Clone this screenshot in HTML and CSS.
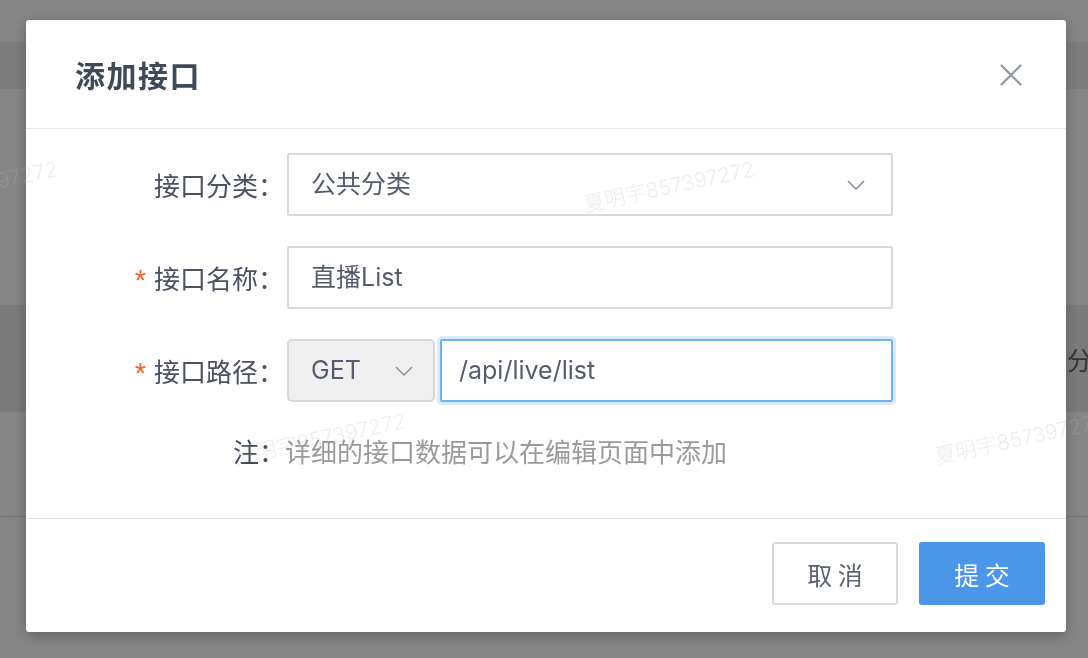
FILE: index.html
```html
<!DOCTYPE html>
<html lang="zh-CN">
<head>
<meta charset="utf-8">
<title>添加接口</title>
<link rel="stylesheet" href="styles.css">
</head>
<body>
<div class="page">
  <div class="pg-top"></div>
  <div class="pg-band"></div>
  <div class="pg-gap"></div>
  <div class="pg-band2"><span class="pg-text">分</span></div>
  <div class="pg-gap2"></div>
  <div class="pg-rest"></div>
</div>
<div class="mask"></div>
<div class="modal">
  <div class="modal-header">
    <h2 class="modal-title">添加接口</h2>
    <span class="close">
      <svg width="22" height="22" viewBox="0 0 22 22"><path d="M1.5 1.5L20.5 20.5M20.5 1.5L1.5 20.5" stroke="#8f95a6" stroke-width="2.2" stroke-linecap="round" fill="none"/></svg>
    </span>
  </div>
  <div class="modal-body">
    <div class="row">
      <label class="label">接口分类：</label>
      <div class="control select">
        <span class="value">公共分类</span>
        <svg class="chev" width="18" height="10" viewBox="0 0 18 10"><path d="M1 1L9 9L17 1" stroke="#8a90a0" stroke-width="1.6" fill="none"/></svg>
      </div>
    </div>
    <div class="row">
      <label class="label"><span class="req">*</span>接口名称：</label>
      <div class="control input"><span class="value">直播List</span></div>
    </div>
    <div class="row">
      <label class="label"><span class="req">*</span>接口路径：</label>
      <div class="control group">
        <div class="method">
          <span class="value">GET</span>
          <svg class="chev" width="18" height="10" viewBox="0 0 18 10"><path d="M1 1L9 9L17 1" stroke="#8a90a0" stroke-width="1.6" fill="none"/></svg>
        </div>
        <div class="path"><span class="value">/api/live/list</span></div>
      </div>
    </div>
    <div class="note"><span class="note-key">注：</span>详细的接口数据可以在编辑页面中添加</div>
  </div>
  <div class="modal-footer">
    <button class="btn btn-cancel">取 消</button>
    <button class="btn btn-primary">提 交</button>
  </div>
</div>
<div class="watermarks">
  <span class="wm wm0">夏明宇857397272</span>
  <span class="wm wm1">夏明宇857397272</span>
  <span class="wm wm2">夏明宇857397272</span>
  <span class="wm wm3">夏明宇857397272</span>
</div>
</body>
</html>
```

FILE: styles.css
```css
* { box-sizing: border-box; }
html, body {
  margin: 0;
  padding: 0;
  width: 1088px;
  height: 658px;
  overflow: hidden;
  background: #ffffff;
  font-family: "Inter", "Noto Sans CJK SC", sans-serif;
}
.page { width: 1088px; }
.pg-top { height: 42px; background: #ffffff; }
.pg-band { height: 47px; background: #f0f0f0; }
.pg-gap { height: 216px; background: #ffffff; }
.pg-band2 {
  height: 107px;
  background: #ebebeb;
  display: flex;
  align-items: center;
  justify-content: flex-end;
}
.pg-text {
  font-size: 25px;
  color: #666;
  margin-right: -4px;
}
.pg-gap2 { height: 105px; background: #ffffff; border-bottom: 1px solid #dddddd; }
.pg-rest { height: 141px; background: #ffffff; }

.mask {
  position: fixed;
  inset: 0;
  background: rgba(0, 0, 0, 0.48);
}

.modal {
  position: fixed;
  left: 26px;
  top: 20px;
  width: 1040px;
  height: 612px;
  background: #ffffff;
  border-radius: 3px;
  box-shadow: 0 4px 14px rgba(0, 0, 0, 0.25);
  display: flex;
  flex-direction: column;
}
.modal-header {
  height: 109px;
  border-bottom: 1px solid #e8e8e8;
  display: flex;
  align-items: center;
  justify-content: space-between;
  padding: 0 44px 0 49px;
}
.modal-title {
  margin: 0;
  font-size: 30px;
  font-weight: 700;
  color: #3f4a58;
  letter-spacing: 1.5px;
}
.close { display: flex; width: 22px; height: 22px; margin-top: 2px; }

.modal-body {
  height: 390px;
  border-bottom: 1px solid #e8e8e8;
  padding-top: 24px;
}
.row {
  display: flex;
  align-items: center;
  height: 63px;
  margin-bottom: 30px;
}
.label {
  width: 261px;
  text-align: right;
  font-size: 26px;
  color: #4a5160;
  padding-right: 3px;
  display: flex;
  align-items: center;
  justify-content: flex-end;
}
.req {
  color: #f0622d;
  margin-right: 8px;
  font-size: 29px;
  font-family: "Liberation Sans", sans-serif;
  line-height: 1;
  position: relative;
  top: 3px;
}
.control {
  width: 606px;
  height: 63px;
  font-size: 25px;
  color: #555c6d;
}
.select, .input {
  border: 2px solid #d9d9d9;
  border-radius: 2px;
  display: flex;
  align-items: center;
  justify-content: space-between;
  padding: 0 26px 0 22px;
}
.group {
  display: flex;
  gap: 5px;
}
.method {
  width: 148px;
  height: 63px;
  background: #efefef;
  border: 2px solid #d7d7d7;
  border-radius: 5px;
  display: flex;
  align-items: center;
  justify-content: space-between;
  padding: 0 20px 0 22px;
}
.path {
  flex: 1;
  height: 63px;
  border: 2px solid #6cb3f6;
  border-radius: 2px;
  box-shadow: 0 0 0 3px #dbe9fa;
  display: flex;
  align-items: center;
  padding-left: 17px;
}
.chev { display: block; }
.value { line-height: 1; }

.note {
  margin-top: 25px;
  padding-left: 207px;
  font-size: 26px;
  color: #9a9a9a;
}
.note-key { color: #3f4a58; }

.modal-footer {
  flex: 1;
  display: flex;
  justify-content: flex-end;
  align-items: flex-start;
  gap: 21px;
  padding: 23px 21px 0 0;
}
.btn {
  width: 126px;
  height: 63px;
  border-radius: 3px;
  font-family: "Noto Sans CJK SC", sans-serif;
  font-size: 25px;
  padding: 0;
}
.btn-cancel {
  background: #ffffff;
  border: 2px solid #d9d9d9;
  color: #5b6275;
}
.btn-primary {
  background: #4a96e8;
  border: 2px solid #4a96e8;
  color: #ffffff;
}

.watermarks {
  position: fixed;
  inset: 0;
  pointer-events: none;
}
.wm {
  position: absolute;
  width: 200px;
  text-align: center;
  font-size: 21px;
  font-weight: 300;
  color: rgba(178, 178, 178, 0.24);
  transform: rotate(-12deg);
  white-space: nowrap;
}
.wm0 { left: -128px; top: 170px; }
.wm1 { left: 569px; top: 170px; }
.wm2 { left: 220px; top: 422px; }
.wm3 { left: 920px; top: 422px; }
```
